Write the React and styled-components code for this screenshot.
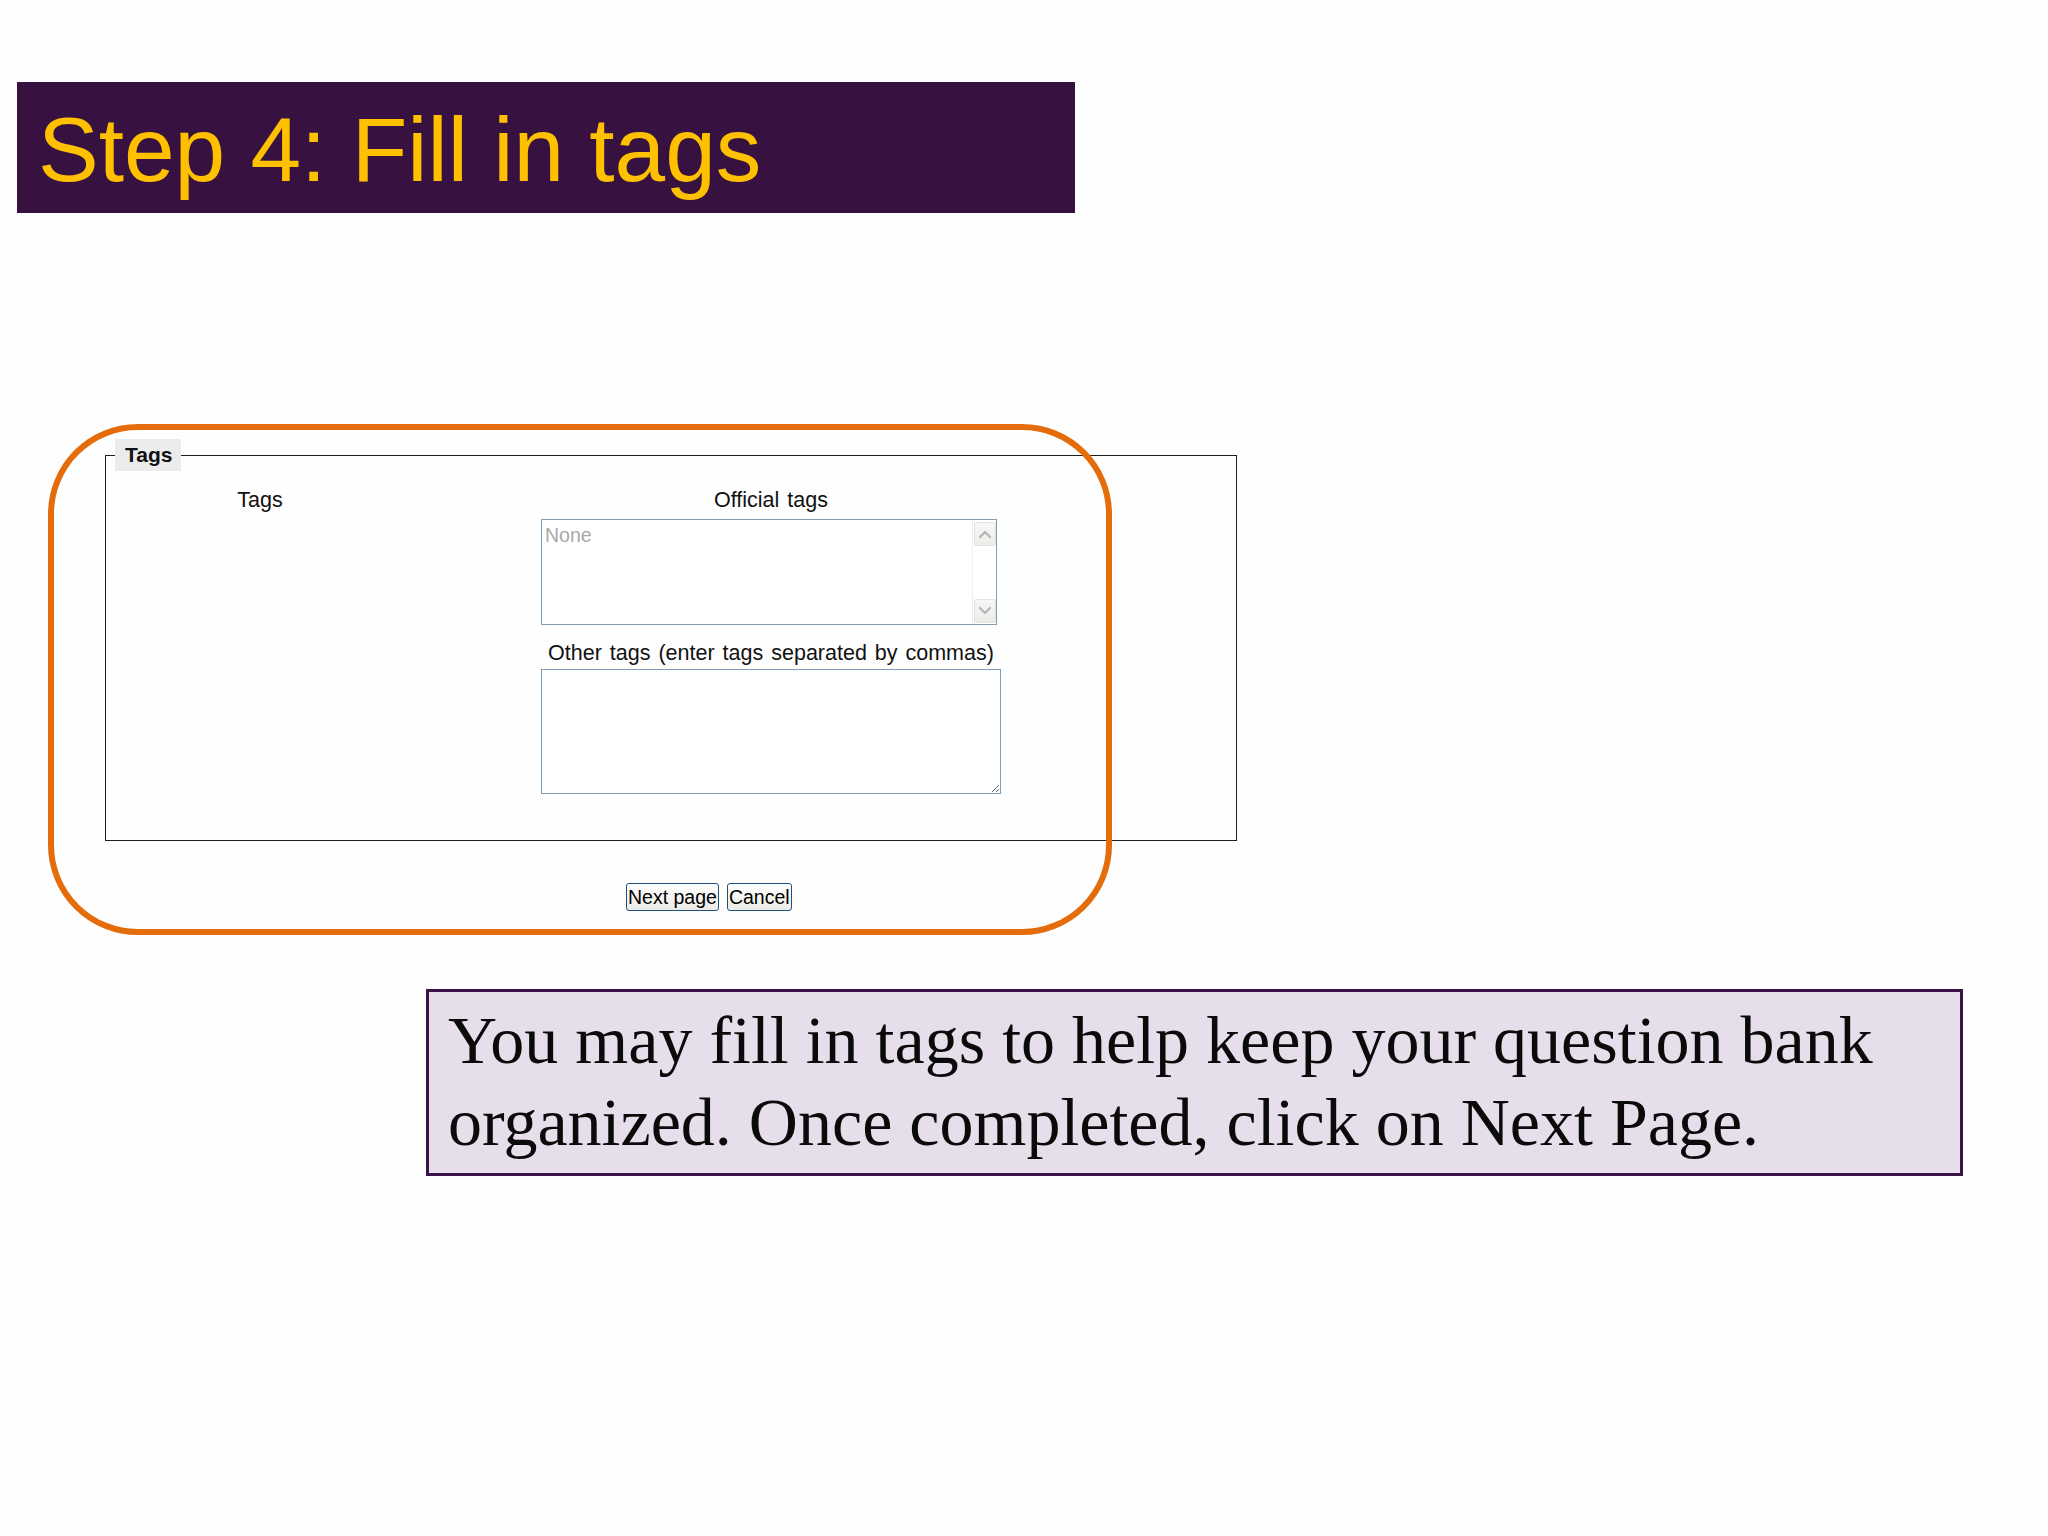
import React from 'react';
import styled, { createGlobalStyle } from 'styled-components';

const GlobalStyle = createGlobalStyle`
    html, body {
        margin: 0;
        padding: 0;
        background: #fefefe;
    }
    body {
        font-family: "Liberation Sans", Arial, sans-serif;
    }
`;

const Slide = styled.div`
    width: 2048px;
    height: 1536px;
    box-sizing: border-box;
    padding-top: 82px;
    background: #fefefe;
    overflow: hidden;
`;

const TitleBar = styled.h1`
    margin: 0 0 0 17px;
    width: 1058px;
    height: 131px;
    box-sizing: border-box;
    padding: 4px 0 0 21px;
    background: #371241;
    color: #ffc000;
    font-family: "Liberation Sans", Arial, sans-serif;
    font-weight: normal;
    font-size: 91px;
    line-height: 127px;
    white-space: nowrap;
`;

const FormArea = styled.section`
    position: relative;
    margin: 211px 0 0 48px;
    padding-top: 15px;
`;

// orange annotation drawn over the form
const Highlight = styled.div`
    position: absolute;
    top: 0;
    left: 0;
    width: 1064px;
    height: 511px;
    box-sizing: border-box;
    border: 6px solid #e46c0a;
    border-radius: 90px;
    pointer-events: none;
    z-index: 2;
`;

const FieldSet = styled.fieldset`
    margin: 0 0 0 57px;
    width: 1132px;
    min-width: 0;
    box-sizing: border-box;
    padding: 0 0 46px 0;
    border: 1px solid #1e1e1e;
`;

const Legend = styled.legend`
    margin-left: 9px;
    padding: 0 9px 0 10px;
    background: #ececec;
    color: #111;
    font-size: 21px;
    font-weight: bold;
    line-height: 32px;
`;

const FormRow = styled.div`
    display: flex;
    flex-direction: row;
    margin-top: 17px;
`;

const LabelCol = styled.div`
    width: 308px;
    text-align: center;
    font-size: 21.5px;
    line-height: 25px;
    color: #111;
`;

const FieldCol = styled.div`
    margin-left: 127px;
    width: 460px;
    display: flex;
    flex-direction: column;
`;

const FieldLabel = styled.div`
    margin-top: ${props => props.gap || 0}px;
    text-align: center;
    font-size: 21.5px;
    line-height: 25px;
    word-spacing: 2px;
    color: #111;
    white-space: nowrap;
`;

const ListBox = styled.div`
    margin-top: 6px;
    width: 456px;
    height: 106px;
    box-sizing: border-box;
    border: 1px solid #7f9db9;
    background: #fff;
    display: flex;
    flex-direction: row;
`;

const ListItems = styled.div`
    flex-grow: 1;
    padding: 4px 0 0 3px;
    font-size: 19.5px;
    line-height: 22px;
    color: #a8a8a8;
`;

const ScrollTrack = styled.div`
    width: 24px;
    border-left: 1px solid #eef0f2;
    display: flex;
    flex-direction: column;
    justify-content: space-between;
    align-items: center;
    padding: 2px 0 1px;
    box-sizing: border-box;
`;

const ScrollButton = styled.div`
    width: 22px;
    height: 24px;
    box-sizing: border-box;
    border: 1px solid #e3e3e3;
    border-radius: 2px;
    background: linear-gradient(#f7f7f5, #ecece9);
    display: flex;
    justify-content: center;
    align-items: center;
`;

const TagsInput = styled.textarea`
    display: block;
    margin-top: 3px;
    width: 460px;
    height: 125px;
    box-sizing: border-box;
    border: 1px solid #7f9db9;
    padding: 2px;
    background: #fff;
    font-family: "Liberation Sans", Arial, sans-serif;
    font-size: 19.5px;
    resize: both;
    outline: none;
`;

const ButtonRow = styled.div`
    display: flex;
    flex-direction: row;
    gap: 8px;
    margin-top: 42px;
    padding-left: 578px;
`;

const FormButton = styled.button`
    height: 28px;
    padding: 0 1px;
    border: 1px solid #1c5180;
    border-radius: 3px;
    background: linear-gradient(#ffffff, #ecebe6);
    color: #000;
    font-family: "Liberation Sans", Arial, sans-serif;
    font-size: 19.5px;
    line-height: 24px;
    cursor: pointer;
`;

const Note = styled.div`
    margin: 78px 0 0 426px;
    width: 1537px;
    height: 187px;
    box-sizing: border-box;
    border: 3px solid #3c1349;
    background: #e6dfeb;
    padding: 7px 0 0 19px;
    font-family: "Liberation Serif", "Times New Roman", serif;
    font-size: 68px;
    line-height: 82px;
    color: #0a0a0a;
`;

const Chevron = ({up}) => (
    <svg width="14" height="10" viewBox="0 0 14 10">
        <polyline
            points={up ? '2,8 7,3 12,8' : '2,2 7,7 12,2'}
            fill="none"
            stroke="#b4b8bc"
            strokeWidth="2.4"
            strokeLinecap="round"
            strokeLinejoin="round"
        />
    </svg>
);

export default function App() {
    return (
        <Slide>
            <GlobalStyle/>
            <TitleBar>Step 4: Fill in tags</TitleBar>

            <FormArea>
                <Highlight/>
                <FieldSet>
                    <Legend>Tags</Legend>
                    <FormRow>
                        <LabelCol>Tags</LabelCol>
                        <FieldCol>
                            <FieldLabel>Official tags</FieldLabel>
                            <ListBox>
                                <ListItems>None</ListItems>
                                <ScrollTrack>
                                    <ScrollButton><Chevron up/></ScrollButton>
                                    <ScrollButton><Chevron/></ScrollButton>
                                </ScrollTrack>
                            </ListBox>
                            <FieldLabel gap={16}>Other tags (enter tags separated by commas)</FieldLabel>
                            <TagsInput defaultValue=""/>
                        </FieldCol>
                    </FormRow>
                </FieldSet>
                <ButtonRow>
                    <FormButton>Next page</FormButton>
                    <FormButton>Cancel</FormButton>
                </ButtonRow>
            </FormArea>

            <Note>
                You may fill in tags to help keep your question bank
                <br/>
                organized. Once completed, click on Next Page.
            </Note>
        </Slide>
    );
}
